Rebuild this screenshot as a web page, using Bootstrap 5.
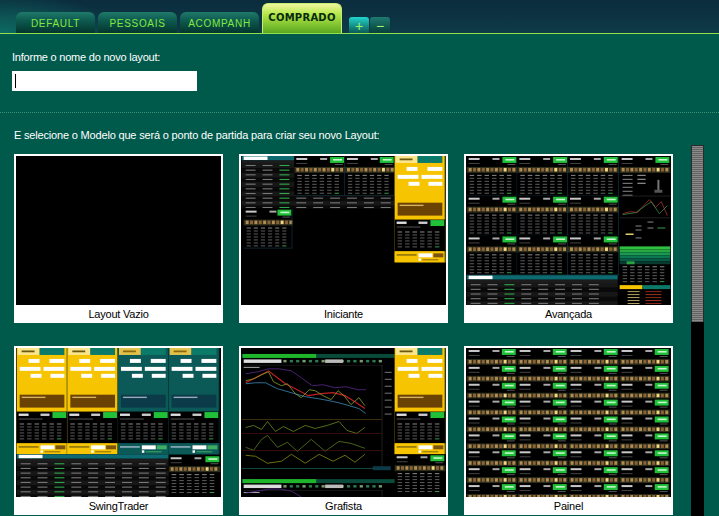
<!DOCTYPE html>
<html lang="pt-BR">
<head>
    <meta charset="UTF-8">
    <meta name="viewport" content="width=device-width, initial-scale=1.0">
    <title>Novo layout</title>
    <link href="https://cdn.jsdelivr.net/npm/bootstrap@5.3.2/dist/css/bootstrap.min.css" rel="stylesheet">
    <style>
        html, body {
            height: 516px;
            overflow: hidden;
        }
        body {
            background-color: #005a4c;
            color: #fff;
            font-family: "Liberation Sans", Arial, sans-serif;
            font-size: 11px;
            letter-spacing: -.22px;
        }
        .top-bar {
            height: 34px;
            padding-left: 16px;
            gap: 3px;
            background: radial-gradient(ellipse 120px 40px at 0 100%, #0d6a62, transparent), linear-gradient(#0b2c3c, #0e3a48);
            border-bottom: 1px solid #93e04f;
        }
        .layout-tab.nav-link {
            width: 79px;
            height: 21px;
            padding: 5px 0 0;
            text-align: center;
            font-size: 10px;
            line-height: 14px;
            letter-spacing: .7px;
            color: #84e83c;
            background: linear-gradient(#1f7a6a, #0e5a50 40%, #03352c);
            border-radius: 6px 6px 0 0;
        }
        .layout-tab.active {
            width: 80px;
            height: 30px;
            padding-top: 7px;
            color: #0a2a10;
            font-family: "DejaVu Sans", sans-serif;
            font-weight: 700;
            font-size: 10px;
            letter-spacing: .25px;
            background: linear-gradient(#f2f6a0, #b4e848 35%, #5aa820);
            border: 1px solid #c8ee70;
            border-bottom: 0;
        }
        .tab-tools {
            margin-left: 4px;
            gap: 1px;
        }
        .tab-tool {
            width: 20px;
            height: 16px;
            padding: 2px 0 0;
            border: 0;
            border-radius: 3px 3px 0 0;
            color: #a8f070;
            font-size: 14px;
            line-height: 14px;
            background: linear-gradient(#1f7a70, #06403a);
        }
        .tab-tool.tool-on {
            background: linear-gradient(#22d4cc, #0a5a54);
        }
        .name-block {
            padding: 16px 12px 0;
        }
        .name-label {
            display: block;
            line-height: 14px;
            margin-bottom: 7px;
        }
        .name-input.form-control {
            width: 185px;
            height: 20px;
            padding: 0 5px;
            border: 0;
            border-radius: 0;
            background: #fff linear-gradient(#000, #000) 3px 3px / 1px 14px no-repeat;
        }
        .dot-rule {
            margin-top: 21px;
            border-top: 1px dotted #3b9078;
        }
        .model-hint {
            margin: 15px 0 0 14px;
            line-height: 14px;
            letter-spacing: -.18px;
        }
        .model-area {
            margin-top: 3px;
        }
        .model-grid {
            width: 691px;
            padding: 9px 0 0 14px;
            display: grid;
            grid-template-columns: repeat(3, 209px);
            column-gap: 16px;
            row-gap: 22px;
        }
        .model-card.card {
            height: 169px;
            padding: 2px 2px 0;
            border: 0;
            border-radius: 0;
            background: #fff;
            color: #000;
            text-align: center;
        }
        .model-thumb {
            display: block;
            width: 205px;
            height: 150px;
            background: #000;
            filter: blur(.45px);
        }
        .model-name {
            padding-top: 1px;
            line-height: 17px;
        }
        .scroll-track {
            width: 13px;
            height: 371px;
            background: #000;
        }
        .scroll-thumb {
            height: 177px;
            border: solid #2a2a2a;
            border-width: 1px 1px 0;
            background: repeating-linear-gradient(#8a8a8a 0, #8a8a8a 1px, #626262 1px, #626262 2px);
        }
    </style>
</head>
<body>
    <ul class="nav top-bar align-items-end">
        <li class="nav-item"><a class="nav-link layout-tab" href="#">DEFAULT</a></li>
        <li class="nav-item"><a class="nav-link layout-tab" href="#">PESSOAIS</a></li>
        <li class="nav-item"><a class="nav-link layout-tab" href="#">ACOMPANH</a></li>
        <li class="nav-item"><a class="nav-link layout-tab active" href="#">COMPRADO</a></li>
        <li class="nav-item d-flex tab-tools">
            <button type="button" class="tab-tool tool-on">+</button>
            <button type="button" class="tab-tool">−</button>
        </li>
    </ul>

    <div class="name-block">
        <label class="name-label" for="layoutName">Informe o nome do novo layout:</label>
        <input type="text" class="form-control name-input" id="layoutName">
    </div>
    <div class="dot-rule"></div>
    <p class="model-hint">E selecione o Modelo que será o ponto de partida para criar seu novo Layout:</p>

    <div class="model-area d-flex">
        <div class="model-grid">
            <div class="card model-card"><svg class="model-thumb" data-model="vazio" viewBox="0 0 205 150"></svg><div class="model-name">Layout Vazio</div></div>
            <div class="card model-card"><svg class="model-thumb" data-model="iniciante" viewBox="0 0 205 150"></svg><div class="model-name">Iniciante</div></div>
            <div class="card model-card"><svg class="model-thumb" data-model="avancada" viewBox="0 0 205 150"></svg><div class="model-name">Avançada</div></div>
            <div class="card model-card"><svg class="model-thumb" data-model="swing" viewBox="0 0 205 150"></svg><div class="model-name">SwingTrader</div></div>
            <div class="card model-card"><svg class="model-thumb" data-model="grafista" viewBox="0 0 205 150"></svg><div class="model-name">Grafista</div></div>
            <div class="card model-card"><svg class="model-thumb" data-model="painel" viewBox="0 0 205 150"></svg><div class="model-name">Painel</div></div>
        </div>
        <div class="scroll-track"><div class="scroll-thumb"></div></div>
    </div>

    <script>
        function rect(x, y, w, h, fill) {
            return `<rect x="${x}" y="${y}" width="${w}" height="${h}" fill="${fill}"/>`;
        }
        function line(points, color, width) {
            return `<polyline points="${points}" fill="none" stroke="${color}" stroke-width="${width || 0.8}"/>`;
        }

        // head of a book widget: ticker, price, green button and the row of icons
        function bookHead(x, y, w) {
            let s = rect(x, y, w, 17, '#000');
            s += rect(x + 2, y + 2, 11, 2, '#c8c8c8');
            s += rect(x + 26, y + 2, 7, 2, '#a8a8a8');
            s += rect(x + w - 15, y + 1, 14, 6, '#20c038');
            s += rect(x + w - 12, y + 3, 9, 1.6, '#c8f4d0');
            s += rect(x + 2, y + 7, 11, 1, '#444');
            s += rect(x + w - 10, y + 8, 8, 1, '#555');
            s += rect(x, y + 11, w, 6, '#2c2c1c');
            for (let i = 0; i < 11; i++) {
                s += rect(x + 2 + i * 4.4, y + 12, 3, 3.6, i === 8 ? '#f0d880' : (i % 2 ? '#8a6438' : '#b08c50'));
            }
            return s;
        }
        function bookRows(x, y, w, rows) {
            let s = '';
            const step = (w - 6) / 6;
            for (let r = 0; r < rows; r++) {
                for (let c = 0; c < 6; c++) {
                    const fill = r === 0 ? '#8a8a8a' : (c === 5 && r === rows - 1 ? '#3a9a4a' : '#5c5c5c');
                    s += rect(x + 3 + c * step, y + r * 3, step - 3, 1, fill);
                }
            }
            return s;
        }
        function book(x, y, w) {
            return rect(x, y, w, 40, '#000') + bookHead(x, y, w) + bookRows(x, y + 19, w, 7)
                + rect(x + w - 0.6, y, 0.6, 40, '#143a48') + rect(x, y + 39.4, w, 0.6, '#143a48');
        }
        function quoteTable(x, y, w, h) {
            let s = rect(x, y, w, h, '#0a0a0a') + rect(x, y, w, 4.5, '#0d6a70') + rect(x + 2, y + 0.5, 24, 3.5, '#fff');
            s += rect(x, y + 4.5, w, 4, '#1c1c1c');
            const cols = Math.floor(w / 17);
            for (let r = 0; r * 4.7 + 9 < h; r++) {
                const ry = y + 9 + r * 4.7;
                if (r % 2 === 0) s += rect(x, ry - 1.5, w, 4.7, '#171717');
                for (let c = 0; c < cols; c++) {
                    s += rect(x + 4 + c * 17, ry, 10, 1.1, c === 2 ? '#2fa84a' : '#777');
                }
            }
            return s;
        }
        function orderPanel(x, y, teal) {
            const bg = teal ? '#0c5a58' : '#f6c400';
            const field = '#fff';
            let s = rect(x, y, 51, 107, bg);
            s += rect(x + 1, y, 22, 7, teal ? '#e2c24a' : '#fbe58c');
            s += rect(x + 5, y + 2.5, 13, 1.8, teal ? '#8a6a10' : '#6a5a10');
            s += rect(x + 23, y, 25, 7, '#0c7a68');
            s += rect(x + 12, y + 11, 11, 4, field) + rect(x + 33, y + 11, 15, 4, field);
            s += rect(x + 3, y + 19, 21, 4, field) + rect(x + 27, y + 19, 21, 4, field);
            s += rect(x + 14, y + 26, 11, 4, field) + rect(x + 34, y + 26, 14, 4, field);
            s += rect(x + 3, y + 47, 45, 13, teal ? '#0b3a48' : '#6a4204');
            s += rect(x + 5, y + 49, 24, 1.4, teal ? '#9ab' : '#d8b060');
            s += rect(x, y + 64, 51, 32, '#000');
            s += rect(x + 2, y + 66, 10, 2.4, '#ddd') + rect(x + 24, y + 66, 9, 2.4, '#ccc');
            s += rect(x + 36, y + 64.5, 14, 6, '#20c038');
            s += rect(x + 2, y + 71, 24, 1, '#555');
            s += bookRows(x, y + 76, 51, 6);
            s += rect(x, y + 96, 51, 11, teal ? '#0c5a58' : '#f6c400');
            s += rect(x + 2, y + 99, 20, 1.2, teal ? '#bcd' : '#6a5a10');
            s += rect(x + 24, y + 98, 14, 4, field) + rect(x + 39, y + 98, 10, 4, teal ? '#3fae60' : '#7a5410');
            s += rect(x + 24, y + 103, 2.5, 2.5, field) + rect(x + 28, y + 104, 16, 1, teal ? '#3fae60' : '#8a6a10');
            s += rect(x + 50.4, y, 0.6, 107, '#06262a');
            return s;
        }
        function chart(x, y, w) {
            let s = rect(x, y + 6, w, 4, '#0a4a3a') + rect(x + 1, y + 6, 74, 4, '#1fb52b');
            s += rect(x + 2, y + 11.5, 38, 3.5, '#ddd');
            for (let i = 0; i < 16; i++) s += rect(x + 42 + i * 6.4, y + 12, 3.2, 2.5, i % 3 ? '#2d7a52' : '#7a9a6a');
            s += rect(x + 84, y + 11.5, 18, 3.5, '#bbb');
            s += rect(x + 2, y + 17, 140, 0.5, '#2a2a2a');
            s += rect(x + 141, y + 17, 0.6, 104, '#333');
            for (let i = 0; i < 7; i++) s += rect(x + 144, y + 24 + i * 7, 7, 1, '#777');
            s += rect(x + 2, y + 19, 16, 1, '#a8a8a8');
            return s;
        }
        function chartLines(y) {
            const move = pts => pts.map(p => p[0] + ',' + (p[1] + y)).join(' ');
            let s = '';
            s += line(move([[4, 26], [16, 24], [27, 21], [38, 21], [50, 23], [60, 30], [71, 38], [82, 37], [94, 40], [105, 39], [117, 42], [125, 42]]), '#5a2a90');
            s += line(move([[4, 36], [14, 35], [24, 35], [36, 41], [50, 45], [64, 49], [77, 51], [88, 53], [97, 55], [108, 58], [118, 61], [125, 66]]), '#3a8ab8');
            s += line(move([[4, 35], [14, 30], [27, 23], [36, 30], [44, 36], [56, 42], [67, 48], [80, 46], [92, 45], [104, 48], [114, 54], [124, 61]]), '#c02020', 1.2);
            s += line(move([[4, 33], [12, 31], [20, 27], [27, 24], [32, 34], [40, 38], [46, 36], [54, 46], [60, 50], [68, 42], [74, 43], [82, 48], [90, 52], [97, 43], [103, 48], [110, 57], [118, 50], [124, 58]]), '#8aa030');
            s += line(move([[4, 80], [12, 78], [20, 82], [26, 74], [34, 84], [42, 79], [52, 84], [64, 78], [74, 81], [86, 78], [98, 74], [106, 83], [116, 86], [124, 80]]), '#6a8a20');
            s += line(move([[4, 100], [12, 103], [20, 92], [26, 88], [36, 100], [46, 95], [56, 104], [70, 92], [84, 104], [98, 94], [110, 96], [124, 101]]), '#5a7a20');
            s += line(move([[4, 108], [14, 109], [26, 116], [40, 114], [50, 107], [64, 116], [78, 107], [92, 114], [104, 108], [114, 115], [124, 107]]), '#8a8a10');
            s += rect(0, y + 72, 141, 0.5, '#7a5a20') + rect(0, y + 86, 141, 0.5, '#6a1a1a') + rect(0, y + 103, 141, 0.5, '#6a1a1a');
            return s;
        }

        const models = {
            vazio: () => '',
            iniciante: () => quoteTable(0, 0, 154, 53) + book(53, 0, 51) + book(104, 0, 50) + book(2, 53, 49) + orderPanel(154, 0, false),
            avancada: () => {
                let s = '';
                for (let r = 0; r < 3; r++) for (let c = 0; c < 3; c++) s += book(c * 51, r * 40, 51);
                s += quoteTable(0, 120, 152, 30);
                s += bookHead(154, 0, 51);
                for (let i = 0; i < 6; i++) s += rect(157, 19 + i * 4, 10, 1, '#888') + rect(172, 19 + (i % 3) * 4, 8, 1, '#888');
                s += rect(192, 24, 2, 12, '#777') + rect(189, 34, 8, 3, '#555');
                s += rect(154, 40, 51, 0.6, '#333');
                s += line('157,58 165,56 172,57 180,48 184,44 190,52 196,46 202,60', '#b03030') + line('157,59 170,57 180,50 186,46 194,58 202,50', '#3a8a4a');
                s += rect(154, 62, 51, 0.6, '#333');
                s += rect(160, 78, 8, 1.5, '#e8d070') + rect(170, 70, 6, 1, '#888') + rect(170, 74, 6, 1, '#888') + rect(170, 82, 6, 1, '#888') + rect(182, 66, 6, 1, '#888') + rect(182, 72, 6, 1, '#888') + rect(192, 72, 8, 1, '#3a9a4a');
                for (let i = 0; i < 6; i++) s += rect(154, 91 + i * 3, 51, 3, ['#30c040', '#28a840', '#189850', '#0c7850', '#0a5a48', '#083a30'][i]);
                s += rect(161, 106, 8, 3, '#2aa040');
                s += bookRows(154, 111, 51, 6);
                s += rect(154, 130, 23, 4, '#f6c400') + rect(177, 130, 28, 4, '#0c7a68');
                for (let i = 0; i < 5; i++) s += rect(162, 136 + i * 3, 12, 1, '#b0a060') + rect(180, 136 + i * 3, 16, 1, i % 2 ? '#a03020' : '#882818');
                return s;
            },
            swing: () => orderPanel(0, 0, false) + orderPanel(51, 0, false) + orderPanel(102, 0, true) + orderPanel(153, 0, true)
                + quoteTable(0, 107, 153, 43) + bookHead(153, 108, 52) + bookRows(153, 127, 52, 7),
            grafista: () => chart(0, 0, 154) + chartLines(0) + rect(0, 121, 140, 0.8, '#0c5a50') + rect(132, 119, 18, 4, '#0c3a48')
                + chart(0, 126, 154) + line('4,146 16,144 27,142 38,142 50,144 60,150', '#5a2a90')
                + orderPanel(154, 0, false) + bookHead(154, 107, 51) + bookRows(154, 126, 51, 7),
            painel: () => {
                let s = '';
                for (let r = 0; r < 9; r++) for (let c = 0; c < 4; c++) s += bookHead(c * 51.3, r * 17, 50.4);
                return s;
            }
        };

        document.querySelectorAll('.model-thumb').forEach(function(svg) {
            svg.innerHTML = models[svg.dataset.model]();
        });
    </script>
    <script src="https://cdn.jsdelivr.net/npm/bootstrap@5.3.2/dist/js/bootstrap.bundle.min.js"></script>
</body>
</html>
